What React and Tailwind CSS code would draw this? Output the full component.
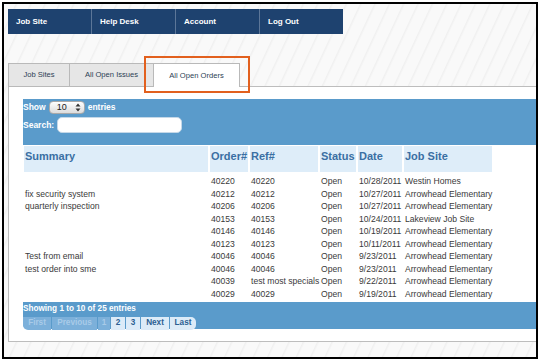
import React from "react";

const NAV = ["Job Site", "Help Desk", "Account", "Log Out"];

const ROWS = [
  ["", "40220", "40220", "Open", "10/28/2011", "Westin Homes"],
  ["fix security system", "40212", "40212", "Open", "10/27/2011", "Arrowhead Elementary"],
  ["quarterly inspection", "40206", "40206", "Open", "10/27/2011", "Arrowhead Elementary"],
  ["", "40153", "40153", "Open", "10/24/2011", "Lakeview Job Site"],
  ["", "40146", "40146", "Open", "10/19/2011", "Arrowhead Elementary"],
  ["", "40123", "40123", "Open", "10/11/2011", "Arrowhead Elementary"],
  ["Test from email", "40046", "40046", "Open", "9/23/2011", "Arrowhead Elementary"],
  ["test order into sme", "40046", "40046", "Open", "9/23/2011", "Arrowhead Elementary"],
  ["", "40039", "test most specials", "Open", "9/22/2011", "Arrowhead Elementary"],
  ["", "40029", "40029", "Open", "9/19/2011", "Arrowhead Elementary"],
];

const HEADERS = ["Summary", "Order#", "Ref#", "Status", "Date", "Job Site"];
const COLS = "grid grid-cols-[186px_40px_70px_38px_46px_88px]";

// pagination buttons: label, width, enabled
const PAGES = [
  ["First", "w-[28px]", false],
  ["Previous", "w-[45px]", false],
  ["1", "w-[12px]", false],
  ["2", "w-[14px]", true],
  ["3", "w-[14px]", true],
  ["Next", "w-[28px]", true],
  ["Last", "w-[26px]", true],
];

export default function App() {
  return (
    <div className="w-[545px] h-[362px] bg-white pt-[2px] pl-[2px] font-['Liberation_Sans',Arial,sans-serif] overflow-hidden">
      <div className="relative w-[536px] h-[357px] border-2 border-black overflow-hidden bg-[repeating-linear-gradient(115deg,#f9f9f9_0px,#f9f9f9_10px,#f0f0f0_11px,#f9f9f9_13px)] pt-[5px] pl-[4px]">
        {/* top nav */}
        <div className="flex w-[335px] h-[25px] bg-[#1e426f]">
          {NAV.map((n, i) => (
            <div
              key={n}
              className={`flex-1 flex items-center pl-[8px] text-white font-bold text-[8px] ${i < 3 ? "border-r border-[#5c7698]" : ""}`}
            >
              {n}
            </div>
          ))}
        </div>

        {/* tabs */}
        <div className="flex mt-[29px] h-[24px]">
          <div className="w-[62px] flex items-center justify-center bg-[#e6e6e6] border border-[#b9b9b9] text-[7.6px] text-[#2d3f55]">
            Job Sites
          </div>
          <div className="w-[84px] flex items-center justify-center bg-[#e6e6e6] border border-l-0 border-[#b9b9b9] text-[7.6px] text-[#2d3f55]">
            All Open Issues
          </div>
          <div className="w-[86px] flex items-center justify-center bg-white border border-l-0 border-b-0 border-[#b9b9b9] text-[7.6px] text-[#2d3f55] relative z-10">
            All Open Orders
          </div>
        </div>

        {/* highlight box */}
        <div className="absolute left-[140px] top-[52px] w-[106px] h-[37px] border-[2.5px] border-[#e2601e] z-20" />

        {/* panel */}
        <div className="-mt-px w-[560px] h-[256px] bg-white border border-[#bdbdbd] pl-[14px] pt-[12px]">
          <div className="w-[540px] h-[46px] bg-[#5a9bcb] text-white font-bold text-[8.5px] pt-[2px]">
            <div className="flex items-center gap-[3px] h-[13px]">
              <span>Show</span>
              <div className="w-[36px] h-[13px] rounded-[4px] bg-gradient-to-b from-white to-[#dcdcdc] border border-[#a9a9a9] flex items-center justify-between pl-[7px] pr-[3px] text-[#222] font-normal text-[9px]">
                <span>10</span>
                <svg width="6" height="9" viewBox="0 0 6 9">
                  <path d="M3 0.5 L5.5 3.5 H0.5 Z M3 8.5 L5.5 5.5 H0.5 Z" fill="#333" />
                </svg>
              </div>
              <span>entries</span>
            </div>
            <div className="flex items-center gap-[3px] mt-[3px]">
              <span>Search:</span>
              <div className="w-[125px] h-[16px] rounded-[5px] bg-white border border-[#c5d8e8]" />
            </div>
          </div>

          {/* header */}
          <div className={`${COLS} ml-px mt-px h-[26px]`}>
            {HEADERS.map((h, i) => (
              <div key={h} className={`bg-[#deedf9] text-[#3a6fa3] font-bold text-[11px] pl-[1px] pt-[2px] ${i < 5 ? "mr-[2px]" : ""}`}>
                {h}
              </div>
            ))}
          </div>

          {/* rows */}
          <div className="mt-[3px] ml-px">
            {ROWS.map((r, i) => (
              <div key={i} className={`${COLS} h-[12.5px] text-[8.6px] text-[#3a3a3a] leading-[12.5px]`}>
                {r.map((c, j) => (
                  <div key={j} className="pl-[1px] whitespace-nowrap">{c}</div>
                ))}
              </div>
            ))}
          </div>

          {/* footer */}
          <div className="mt-[1.5px] w-[540px] h-[27px] bg-[#5a9bcb] rounded-bl-[5px] pt-[2px]">
            <div className="text-white font-bold text-[8.2px] leading-[10px]">Showing 1 to 10 of 25 entries</div>
            <div className="flex mt-[3px] h-[13px] gap-px">
              {PAGES.map(([label, w, on], i) => (
                <div
                  key={label}
                  className={`${w} flex items-center justify-center text-[8.2px] font-bold ${
                    on ? "bg-[#dcebf8] text-[#2c5f92]" : "bg-[#7cb0da] text-[#a9cbe8]"
                  } ${i === 0 ? "rounded-bl-[5px]" : ""} ${i === PAGES.length - 1 ? "rounded-r-[5px]" : ""}`}
                >
                  {label}
                </div>
              ))}
            </div>
          </div>
        </div>
      </div>
    </div>
  );
}
